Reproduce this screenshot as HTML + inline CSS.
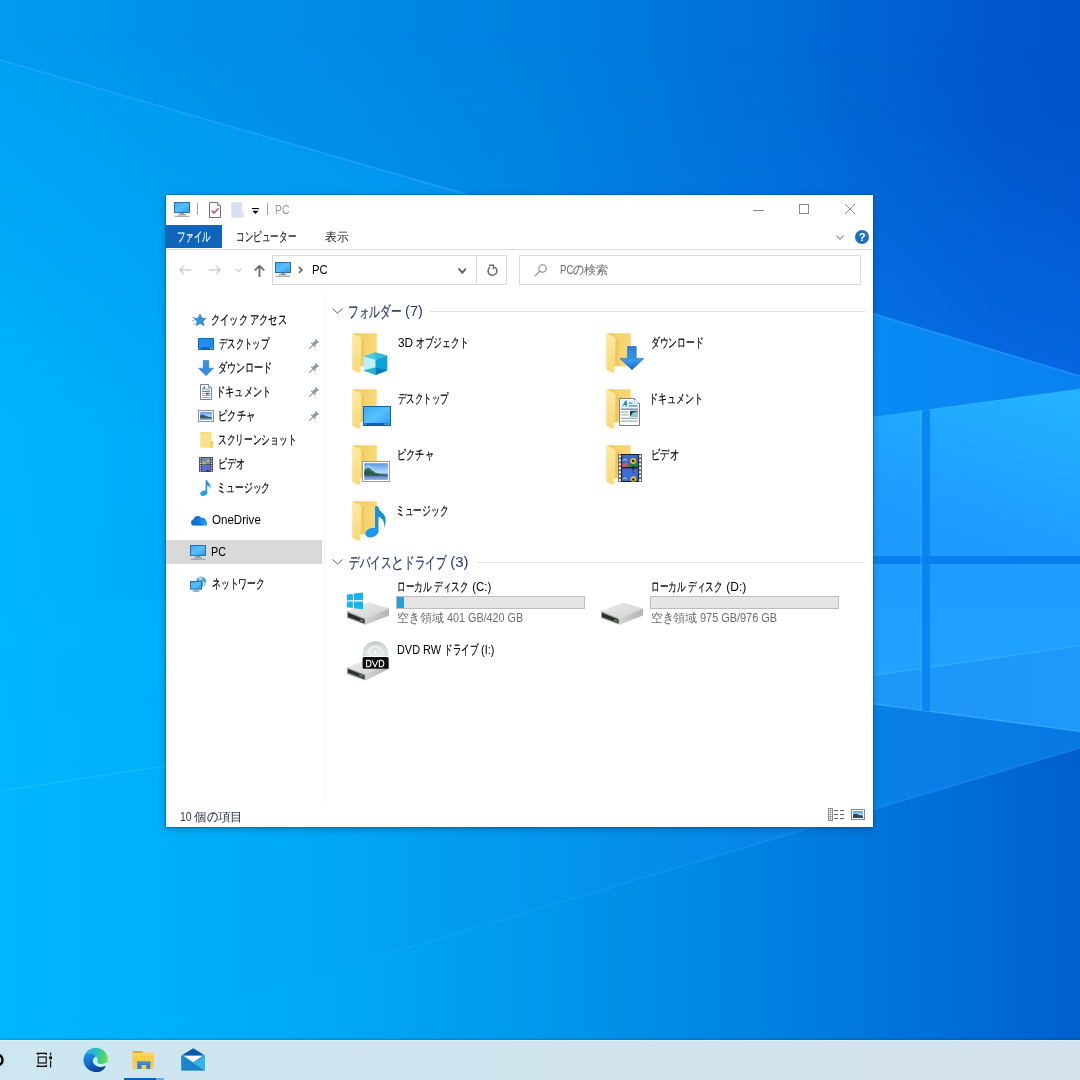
<!DOCTYPE html>
<html lang="ja">
<head>
<meta charset="utf-8">
<title>PC</title>
<style>
html,body{margin:0;padding:0;}
body{width:1080px;height:1080px;overflow:hidden;position:relative;background:#0a84e4;font-family:"Liberation Sans",sans-serif;font-size:12px;color:#000;}
.abs{position:absolute;display:block;}
#bg{position:absolute;left:0;top:0;width:1080px;height:1080px;}
#win{position:absolute;left:166px;top:195px;width:707px;height:632px;background:#fff;box-shadow:0 0 0 1px rgba(0,70,130,.32),0 2px 7px rgba(0,45,80,.38);}
.t{position:absolute;white-space:nowrap;line-height:16px;height:16px;}
.t{white-space:pre;}
.t span{position:absolute;top:0;left:0;display:block;transform-origin:0 50%;}
.t .k,.t .g{-webkit-text-stroke:.2px currentColor;}
.box{position:absolute;box-sizing:border-box;}
#taskbar{position:absolute;left:0;top:1040px;width:1080px;height:40px;background:linear-gradient(90deg,#cde6ef 0%,#d0e4ee 50%,#d5e1ec 100%);box-shadow:0 -1px 2px rgba(0,40,90,.25),inset 0 1px 0 rgba(220,246,255,.7);}
</style>
</head>
<body>

<svg id="bg" viewBox="0 0 1080 1080">
<defs>
<linearGradient id="gBase" x1="0" y1="0" x2="1" y2="0">
<stop offset="0" stop-color="#009aef"/><stop offset=".25" stop-color="#008de8"/><stop offset=".5" stop-color="#0080e0"/><stop offset=".72" stop-color="#006dd8"/><stop offset=".93" stop-color="#0056cc"/><stop offset="1" stop-color="#0053ca"/>
</linearGradient>
<linearGradient id="gDark" x1="0" y1="0" x2="1" y2="0">
<stop offset="0" stop-color="#00b6fd"/><stop offset=".28" stop-color="#00aaf6"/><stop offset=".5" stop-color="#0098ec"/><stop offset=".72" stop-color="#0080e0"/><stop offset=".93" stop-color="#0068d4"/><stop offset="1" stop-color="#0060cc"/>
</linearGradient>
<linearGradient id="gVFade" x1="0" y1="0" x2="0" y2="1">
<stop offset=".03" stop-color="#fff" stop-opacity="0"/><stop offset=".2" stop-color="#fff" stop-opacity=".4"/><stop offset=".4" stop-color="#fff" stop-opacity=".95"/><stop offset=".75" stop-color="#fff" stop-opacity="1"/>
</linearGradient>
<linearGradient id="gHFade" x1="0" y1="0" x2="1" y2="0">
<stop offset="0" stop-color="#000"/><stop offset=".3" stop-color="#000" stop-opacity=".6"/><stop offset="1" stop-color="#000" stop-opacity="0"/>
</linearGradient>
<mask id="mV"><rect width="1080" height="1080" fill="url(#gVFade)"/><rect width="1080" height="600" fill="url(#gHFade)" transform="rotate(180 540 300)"/></mask>
<linearGradient id="gWedge" x1="0" y1="0" x2="1" y2="0">
<stop offset="0" stop-color="#00b2fe" stop-opacity=".22"/><stop offset=".45" stop-color="#04a0fa" stop-opacity=".5"/><stop offset=".8" stop-color="#0a8ef8"/><stop offset="1" stop-color="#0a86f4"/>
</linearGradient>
<linearGradient id="gPane" x1="0" y1="1" x2="1" y2="0">
<stop offset="0" stop-color="#1a94f8"/><stop offset=".55" stop-color="#1f9eff"/><stop offset="1" stop-color="#24b4ff"/>
</linearGradient>
<linearGradient id="gPane2" x1="0" y1="0" x2="0" y2="1">
<stop offset="0" stop-color="#1f9cff"/><stop offset=".55" stop-color="#20a0ff"/><stop offset="1" stop-color="#24acff"/>
</linearGradient>
<linearGradient id="gPaneLo" x1="0" y1="0" x2="1" y2="0">
<stop offset="0" stop-color="#1a92f6"/><stop offset="1" stop-color="#1f99f9"/>
</linearGradient>
<linearGradient id="gBelow" x1="0" y1="0" x2="1" y2="0">
<stop offset="0" stop-color="#00b0fa" stop-opacity="0"/><stop offset=".5" stop-color="#0a94ee" stop-opacity=".3"/><stop offset=".8" stop-color="#0a82ea" stop-opacity=".95"/><stop offset="1" stop-color="#0878e2"/>
</linearGradient>
<linearGradient id="gUp" x1="0" y1="0" x2="0" y2="1">
<stop offset=".3" stop-color="#0a74f0" stop-opacity="0"/><stop offset="1" stop-color="#0a76f4" stop-opacity=".55"/>
</linearGradient>
</defs>
<rect width="1080" height="1080" fill="url(#gBase)"/>
<rect width="1080" height="1080" fill="url(#gDark)" mask="url(#mV)"/>
<polygon points="560,0 1080,0 1080,376 700,261.6 560,221.3" fill="url(#gUp)"/>
<!-- wedge between upper beam and logo top -->
<polygon points="0,60 700,261.6 1080,376 1080,389 873,417.5 0,538" fill="url(#gWedge)" opacity=".92"/>
<!-- below logo -->
<polygon points="600,667.5 1080,731.3 1080,748 0,1069 0,700" fill="url(#gBelow)"/>
<!-- logo panes -->
<polygon points="600,455 1080,389 1080,560 600,560" fill="url(#gPane)"/>
<polygon points="600,560 1080,560 1080,731.3 600,667.5" fill="url(#gPane2)"/>
<polygon points="600,715 1080,645.6 1080,731.3 600,667.5" fill="url(#gPaneLo)"/>
<line x1="600" y1="715" x2="1080" y2="645.6" stroke="#38b8ff" stroke-opacity=".6" stroke-width="1.4"/>
<line x1="600" y1="667.5" x2="1080" y2="731.3" stroke="#3ab0ff" stroke-opacity=".7" stroke-width="1.4"/>
<line x1="600" y1="455" x2="1080" y2="389" stroke="#3cc0ff" stroke-opacity=".5" stroke-width="1.2"/>
<!-- dividers -->
<polygon points="922,410.8 930,409.7 930,711.4 922,710.3" fill="#0a86f0"/>
<rect x="600" y="556" width="480" height="8" fill="#0a80ee"/>
<rect x="920.6" y="411" width="1.4" height="299" fill="#40b0ff" opacity=".5"/>
<!-- beam lines -->
<polyline points="0,60 700,261.6 1080,376" fill="none" stroke="#3ab4ff" stroke-opacity=".45" stroke-width="1.6"/>
<line x1="0" y1="791" x2="600" y2="700" stroke="#4cc8ff" stroke-opacity=".3" stroke-width="1.6"/>
<line x1="1080" y1="748" x2="380" y2="956" stroke="#30a8ff" stroke-opacity=".3" stroke-width="1.6"/>
</svg>

<svg width="0" height="0" style="position:absolute">
<defs>
<linearGradient id="scr" x1="0" y1="0" x2="1" y2="1"><stop offset="0" stop-color="#3aa8f8"/><stop offset=".5" stop-color="#58c0ff"/><stop offset="1" stop-color="#2a98f0"/></linearGradient>
<linearGradient id="fback" x1="0" y1="0" x2="1" y2="0"><stop offset="0" stop-color="#efc75e"/><stop offset=".3" stop-color="#f3cf6a"/><stop offset="1" stop-color="#fbd976"/></linearGradient>
<linearGradient id="fflap" x1="0" y1="0" x2="0" y2="1"><stop offset="0" stop-color="#fde9a0"/><stop offset="1" stop-color="#f9d97a"/></linearGradient>
<linearGradient id="sky" x1="0" y1="0" x2="0" y2="1"><stop offset="0" stop-color="#5a98e8"/><stop offset=".55" stop-color="#b4daf6"/><stop offset=".7" stop-color="#3f6fb8"/><stop offset="1" stop-color="#9db8e4"/></linearGradient>
<linearGradient id="hddtop" x1="0" y1="0" x2="1" y2="1"><stop offset="0" stop-color="#ececec"/><stop offset="1" stop-color="#cfcfcf"/></linearGradient>
<linearGradient id="hddside" x1="0" y1="0" x2="1" y2="0"><stop offset="0" stop-color="#d2d2d2"/><stop offset="1" stop-color="#b4b4b4"/></linearGradient>
<linearGradient id="arr" x1="0" y1="0" x2="0" y2="1"><stop offset="0" stop-color="#2a78dc"/><stop offset=".6" stop-color="#3a9af0"/><stop offset="1" stop-color="#1f66cc"/></linearGradient>
<radialGradient id="disc" cx=".5" cy=".9" r=".9"><stop offset="0" stop-color="#f4f6f6"/><stop offset=".35" stop-color="#dfe6e4"/><stop offset=".7" stop-color="#d2d6d6"/><stop offset="1" stop-color="#c4c8c8"/></radialGradient>
</defs></svg>
<div id="win"></div>
<div class="box" style="left:166px;top:225px;width:56px;height:23px;background:#1064ba"></div>
<div class="box" style="left:166px;top:249px;width:707px;height:1px;background:#dadbdc"></div>
<svg class="abs" style="left:174px;top:202px" width="16" height="15" viewBox="0 0 16 15" ><rect x="0.5" y="0.5" width="15" height="10" fill="url(#scr)" stroke="#2b6ea8" stroke-width="1"/>
<rect x="6" y="11" width="4" height="1.6" fill="#8aa0b4"/><rect x="4" y="12.3" width="8" height="1" fill="#6e8aa2"/>
<rect x="0.5" y="13.8" width="15" height="1" fill="#9a9a9a"/></svg>
<div class="box" style="left:197px;top:203px;width:1px;height:12px;background:#a0a0a0"></div>
<svg class="abs" style="left:209px;top:202px" width="12" height="16" viewBox="0 0 12 16" ><path d="M0.5,0.5 H8.5 L11.5,3.5 V15.5 H0.5 Z" fill="#fff" stroke="#6e6e6e" stroke-width="1"/><path d="M8.5,0.5 V3.5 H11.5" fill="#dfe6ee" stroke="#6e6e6e" stroke-width=".8"/>
<path d="M2.6,8.6 L5,11 L9.6,6.2" fill="none" stroke="#b26a52" stroke-width="1.6"/></svg>
<svg class="abs" style="left:231px;top:202px" width="13" height="16" viewBox="0 0 13 16" ><path d="M0.3,0.3 H11.2 V8.8 H12.6 V15.8 H0.3 Z" fill="#d6dfec"/><path d="M10.2,4 H11.2 V15.8 H10.2 Z" fill="#e6edf6"/></svg>
<svg class="abs" style="left:252px;top:208px" width="7" height="6" viewBox="0 0 7 6" ><rect x="0" y="0" width="7" height="1.1" fill="#000"/><path d="M0.4,2.8 H6.6 L3.5,6 Z" fill="#000"/></svg>
<div class="box" style="left:267px;top:203px;width:1px;height:12px;background:#a0a0a0"></div>
<div class="box" style="left:753px;top:210px;width:11px;height:1px;background:#8a8a8a"></div>
<div class="box" style="left:799px;top:204px;width:10px;height:10px;border:1px solid #8a8a8a"></div>
<svg class="abs" style="left:844px;top:203px" width="12" height="12" viewBox="0 0 12 12" ><path d="M1,1 L11,11 M11,1 L1,11" fill="none" stroke="#8a8a8a" stroke-width="1" /></svg>
<svg class="abs" style="left:836px;top:235px" width="8" height="5" viewBox="0 0 8 5" ><path d="M0.5,0.5 L4.0,4.3 L7.5,0.5" fill="none" stroke="#9a9a9a" stroke-width="1.2" /></svg>
<svg class="abs" style="left:855px;top:230px" width="14" height="14" viewBox="0 0 14 14" ><circle cx="7" cy="7" r="7" fill="#1b70c2"/><text x="7" y="11" font-family="Liberation Sans, sans-serif" font-weight="bold" font-size="11" fill="#fff" text-anchor="middle">?</text></svg>
<svg class="abs" style="left:179px;top:265px" width="12" height="10" viewBox="0 0 12 10" ><path d="M5,0.7 L0.8,5 L5,9.3 M1,5 H12" fill="none" stroke="#d0d0d0" stroke-width="1.5" /></svg>
<svg class="abs" style="left:209px;top:265px" width="12" height="10" viewBox="0 0 12 10" ><path d="M7,0.7 L11.2,5 L7,9.3 M11,5 H0" fill="none" stroke="#d0d0d0" stroke-width="1.5" /></svg>
<svg class="abs" style="left:235px;top:267.6px" width="7" height="4.5" viewBox="0 0 7 4.5" ><path d="M0.5,0.5 L3.5,3.8 L6.5,0.5" fill="none" stroke="#d4d4d4" stroke-width="1.4" /></svg>
<svg class="abs" style="left:254px;top:265px" width="11" height="12" viewBox="0 0 11 12" ><path d="M0.8,5.4 L5.5,0.9 L10.2,5.4 M5.5,1.2 V12" fill="none" stroke="#6a6a6a" stroke-width="1.8" /></svg>
<div class="box" style="left:272px;top:255px;width:235px;height:30px;border:1px solid #d9d9d9;background:#fff"></div>
<div class="box" style="left:476px;top:256px;width:1px;height:28px;background:#d9d9d9"></div>
<svg class="abs" style="left:275px;top:262px" width="16" height="15" viewBox="0 0 16 15" ><rect x="0.5" y="0.5" width="15" height="10" fill="url(#scr)" stroke="#2b6ea8" stroke-width="1"/>
<rect x="6" y="11" width="4" height="1.6" fill="#8aa0b4"/><rect x="4" y="12.3" width="8" height="1" fill="#6e8aa2"/>
<rect x="0.5" y="13.8" width="15" height="1" fill="#9a9a9a"/></svg>
<svg class="abs" style="left:298px;top:266px" width="5" height="8" viewBox="0 0 5 8" ><path d="M0.9,1.1 L3.9,4 L0.9,6.9" fill="none" stroke="#5a5a5a" stroke-width="1.6" /></svg>
<svg class="abs" style="left:457.6px;top:268.4px" width="8.6" height="5.4" viewBox="0 0 8.6 5.4" ><path d="M0.5,0.5 L4.3,4.7 L8.1,0.5" fill="none" stroke="#606060" stroke-width="1.9" /></svg>
<svg class="abs" style="left:486.9px;top:264.4px" width="11" height="12" viewBox="0 0 11 12" ><path d="M7.6,3 A4.4,4.4 0 1 1 3.3,3.05" fill="none" stroke="#6a6a6a" stroke-width="1.5"/><path d="M2,1.3 H6.4 V5.4" fill="none" stroke="#6a6a6a" stroke-width="1.4"/></svg>
<div class="box" style="left:519px;top:255px;width:342px;height:30px;border:1px solid #d9d9d9;background:#fff"></div>
<svg class="abs" style="left:534px;top:264px" width="13" height="13" viewBox="0 0 13 13" ><circle cx="8.6" cy="4.4" r="3.7" fill="none" stroke="#8a8a8a" stroke-width="1.1"/><path d="M5.9,7.1 L0.6,12.4" stroke="#8a8a8a" stroke-width="1.2"/></svg>
<div class="box" style="left:166px;top:540px;width:156px;height:24px;background:#d9d9d9"></div>
<div class="box" style="left:324px;top:293px;width:1px;height:510px;background:#f6f6f6"></div>
<svg class="abs" style="left:192px;top:314px" width="14" height="12" viewBox="0 0 14 12" ><path d="M8,0.2 L9.9,4.2 L13.9,4.5 L10.8,7.3 L11.8,11.6 L8,9.3 L4.2,11.6 L5.2,7.3 L2.1,4.5 L6.1,4.2 Z" fill="#2c95e6" stroke="#1f6fae" stroke-width=".7"/>
<rect x="0.2" y="3" width="2.4" height=".8" fill="#5aaee8"/><rect x="0" y="6.4" width="2.6" height=".8" fill="#5aaee8"/><rect x="0.8" y="9.6" width="2.4" height=".8" fill="#5aaee8"/></svg>
<svg class="abs" style="left:198px;top:338px" width="16" height="12" viewBox="0 0 16 12" ><rect x="0.5" y="0.5" width="15" height="11" fill="#1e8fee" stroke="#106cc0" stroke-width="1"/>
<rect x="1" y="9.4" width="14" height="1.8" fill="#0d62ac"/><rect x="1.4" y="9.8" width="1" height="1" fill="#fff"/><rect x="12" y="9.8" width="1" height="1" fill="#fff"/><rect x="13.7" y="9.8" width="1" height="1" fill="#fff"/></svg>
<svg class="abs" style="left:198px;top:360px" width="16" height="16" viewBox="0 0 16 16" ><path d="M5.2,0.2 H10.8 V8.2 H15.6 L8,15.8 L0.4,8.2 H5.2 Z" fill="#3b8de0" stroke="#2a74c8" stroke-width=".5"/></svg>
<svg class="abs" style="left:200px;top:384px" width="12" height="16" viewBox="0 0 12 16" ><path d="M0.5,0.5 H8.5 L11.5,3.5 V15.5 H0.5 Z" fill="#fff" stroke="#7a7f86" stroke-width="1"/><path d="M8.5,0.5 V3.5 H11.5" fill="#eef2f4" stroke="#7a7f86" stroke-width=".8"/>
<path d="M2,5.6 L4.2,2.2 H5 L5.2,5.6 H4.3 L4.2,4.8 H3.2 L2.8,5.6 Z" fill="#2a78b8"/><rect x="6" y="4.6" width="4" height=".9" fill="#4a90c0"/>
<rect x="2" y="6.8" width="8" height="1" fill="#2f6f9a"/><rect x="2" y="9" width="3.4" height=".9" fill="#98a4ae"/><rect x="2" y="11" width="3.4" height=".9" fill="#98a4ae"/><rect x="6.2" y="8.8" width="3.8" height="3" fill="#2d4658"/><path d="M6.2,11.8 L8,9.6 L10,9.2 V11.8 Z" fill="#8cc8e0"/>
<rect x="2" y="13" width="8" height=".9" fill="#98a4ae"/></svg>
<svg class="abs" style="left:198px;top:410px" width="16" height="12" viewBox="0 0 16 12" ><rect x="0.5" y="0.5" width="15" height="11" fill="#fff" stroke="#8a939c" stroke-width="1"/>
<rect x="2" y="2" width="12" height="8" fill="url(#sky)"/><path d="M2,5.6 Q4,3.6 6,5 Q9,7 14,7.4 V8 H2 Z" fill="#2f5f58"/></svg>
<svg class="abs" style="left:200px;top:432px" width="13" height="16" viewBox="0 0 13 16" ><path d="M0.3,0.3 H11.4 V9 H12.7 V15.8 H0.3 Z" fill="#fbe087"/><path d="M10.4,9 H12.7 V15.8 H10.4 Z" fill="#f1cd55"/><path d="M0.3,0.3 H11.4 V1 H0.3 Z" fill="#f3d36a"/></svg>
<svg class="abs" style="left:199px;top:457px" width="14" height="15" viewBox="0 0 14 15" ><rect width="14" height="15" fill="#3c4448"/><rect x="0.8" y="0.90" width="1.1" height="1.2" fill="#fff"/><rect x="12.1" y="0.90" width="1.1" height="1.2" fill="#fff"/><rect x="0.8" y="3.35" width="1.1" height="1.2" fill="#fff"/><rect x="12.1" y="3.35" width="1.1" height="1.2" fill="#fff"/><rect x="0.8" y="5.80" width="1.1" height="1.2" fill="#fff"/><rect x="12.1" y="5.80" width="1.1" height="1.2" fill="#fff"/><rect x="0.8" y="8.25" width="1.1" height="1.2" fill="#fff"/><rect x="12.1" y="8.25" width="1.1" height="1.2" fill="#fff"/><rect x="0.8" y="10.70" width="1.1" height="1.2" fill="#fff"/><rect x="12.1" y="10.70" width="1.1" height="1.2" fill="#fff"/><rect x="0.8" y="13.15" width="1.1" height="1.2" fill="#fff"/><rect x="12.1" y="13.15" width="1.1" height="1.2" fill="#fff"/><rect x="2.6" y="0.8" width="8.8" height="6.4" fill="#6c8cb8"/><rect x="2.6" y="8" width="8.8" height="6.4" fill="#5a6ed0"/>
<path d="M2.6,5 L6,4.2 L8,7.2 H2.6 Z" fill="#c8a080"/><circle cx="9" cy="4" r="1.3" fill="#d8c040"/><path d="M7,14.4 Q8.6,10.5 10.6,14.4 Z" fill="#2a2a3a"/></svg>
<svg class="abs" style="left:200px;top:479.6px" width="12" height="17" viewBox="0 0 12 17" ><path d="M5.6,0.3 H7.2 C7.6,2.6 11.4,4 10.6,10 C10.4,7 9,5.6 7.2,5.2 V13 H5.6 Z" fill="#1f90d8"/><ellipse cx="3.8" cy="13.2" rx="3.6" ry="2.6" transform="rotate(-15 3.8 13.2)" fill="#2a9cec"/></svg>
<svg class="abs" style="left:189.5px;top:514.5px" width="17" height="11" viewBox="0 0 17 11" ><defs><linearGradient id="cl" x1="0" y1="0" x2="1" y2="1"><stop offset="0" stop-color="#0a5cc0"/><stop offset=".5" stop-color="#1484e0"/><stop offset="1" stop-color="#2fb0f4"/></linearGradient></defs>
<path d="M3.6,10.6 A3.3,3.3 0 0 1 3.4,4.2 A4.6,4.6 0 0 1 11.6,3 A3.4,3.4 0 0 1 16.2,6.2 A2.3,2.3 0 0 1 14.6,10.6 Z" fill="url(#cl)"/>
<path d="M1.2,8.6 Q4,5.2 8.4,6.4 L14.6,10.6 H3.6 Q2,10.4 1.2,8.6 Z" fill="#0a64c8" opacity=".55"/></svg>
<svg class="abs" style="left:190px;top:545px" width="16" height="15" viewBox="0 0 16 15" ><rect x="0.5" y="0.5" width="15" height="10" fill="url(#scr)" stroke="#2b6ea8" stroke-width="1"/>
<rect x="6" y="11" width="4" height="1.6" fill="#8aa0b4"/><rect x="4" y="12.3" width="8" height="1" fill="#6e8aa2"/>
<rect x="0.5" y="13.8" width="15" height="1" fill="#9a9a9a"/></svg>
<svg class="abs" style="left:189.5px;top:575.8px" width="17" height="16" viewBox="0 0 17 16" ><circle cx="11.2" cy="5.6" r="5.2" fill="#5aa0d8"/><path d="M8,2 Q11,0.2 13,1.4 Q12,4 9.6,4.6 Z M13,6 Q15.6,5.4 16,7.4 Q15,10 13,10.4 Z" fill="#bfe0f4" opacity=".85"/>
<rect x="0.5" y="5.5" width="11" height="7.6" fill="url(#scr)" stroke="#2b6ea8" stroke-width="1"/><rect x="4.4" y="13.4" width="3.4" height="1.2" fill="#7e97ac"/><rect x="2.6" y="14.6" width="7" height="1" fill="#5a88b0"/></svg>
<svg class="abs" style="left:308.4px;top:338.5px" width="11" height="11" viewBox="0 0 11 11" overflow="visible"><g transform="rotate(45 5.5 5.5)" fill="#8d9394"><rect x="3.2" y="0" width="4.6" height="1.3"/><rect x="3.9" y="1.3" width="3.2" height="3.6"/><path d="M2.2,6.4 Q2.4,4.9 3.9,4.9 H7.1 Q8.6,4.9 8.8,6.4 Z"/><rect x="5" y="6.4" width="1" height="5.2"/></g></svg>
<svg class="abs" style="left:308.4px;top:362.5px" width="11" height="11" viewBox="0 0 11 11" overflow="visible"><g transform="rotate(45 5.5 5.5)" fill="#8d9394"><rect x="3.2" y="0" width="4.6" height="1.3"/><rect x="3.9" y="1.3" width="3.2" height="3.6"/><path d="M2.2,6.4 Q2.4,4.9 3.9,4.9 H7.1 Q8.6,4.9 8.8,6.4 Z"/><rect x="5" y="6.4" width="1" height="5.2"/></g></svg>
<svg class="abs" style="left:308.4px;top:386.5px" width="11" height="11" viewBox="0 0 11 11" overflow="visible"><g transform="rotate(45 5.5 5.5)" fill="#8d9394"><rect x="3.2" y="0" width="4.6" height="1.3"/><rect x="3.9" y="1.3" width="3.2" height="3.6"/><path d="M2.2,6.4 Q2.4,4.9 3.9,4.9 H7.1 Q8.6,4.9 8.8,6.4 Z"/><rect x="5" y="6.4" width="1" height="5.2"/></g></svg>
<svg class="abs" style="left:308.4px;top:410.5px" width="11" height="11" viewBox="0 0 11 11" overflow="visible"><g transform="rotate(45 5.5 5.5)" fill="#8d9394"><rect x="3.2" y="0" width="4.6" height="1.3"/><rect x="3.9" y="1.3" width="3.2" height="3.6"/><path d="M2.2,6.4 Q2.4,4.9 3.9,4.9 H7.1 Q8.6,4.9 8.8,6.4 Z"/><rect x="5" y="6.4" width="1" height="5.2"/></g></svg>
<svg class="abs" style="left:332px;top:308px" width="11" height="5.8" viewBox="0 0 11 5.8" ><path d="M0.5,0.5 L5.5,5.1 L10.5,0.5" fill="none" stroke="#5a5a5a" stroke-width="1" /></svg>
<div class="box" style="left:430px;top:311px;width:435px;height:1px;background:#e2e2e2"></div>
<svg class="abs" style="left:332px;top:559px" width="11" height="5.8" viewBox="0 0 11 5.8" ><path d="M0.5,0.5 L5.5,5.1 L10.5,0.5" fill="none" stroke="#5a5a5a" stroke-width="1" /></svg>
<div class="box" style="left:477px;top:562px;width:388px;height:1px;background:#e2e2e2"></div>
<svg class="abs" style="left:352px;top:333px" width="26" height="40" viewBox="0 0 26 40" ><path d="M1.2,0.3 H24.8 V33.2 H7 Z" fill="url(#fback)"/>
<path d="M9.4,6 H12.2 V33.2 H9.4 Z" fill="#e9bf58" opacity=".55"/>
<path d="M0.2,0.6 L7.2,3.4 Q9.6,4.5 9.5,7.2 L8.2,38.6 Q8.1,39.9 7,39.6 L4.4,39.2 L0.2,36.4 Z" fill="url(#fflap)"/></svg>
<svg class="abs" style="left:352px;top:389px" width="26" height="40" viewBox="0 0 26 40" ><path d="M1.2,0.3 H24.8 V33.2 H7 Z" fill="url(#fback)"/>
<path d="M9.4,6 H12.2 V33.2 H9.4 Z" fill="#e9bf58" opacity=".55"/>
<path d="M0.2,0.6 L7.2,3.4 Q9.6,4.5 9.5,7.2 L8.2,38.6 Q8.1,39.9 7,39.6 L4.4,39.2 L0.2,36.4 Z" fill="url(#fflap)"/></svg>
<svg class="abs" style="left:352px;top:445px" width="26" height="40" viewBox="0 0 26 40" ><path d="M1.2,0.3 H24.8 V33.2 H7 Z" fill="url(#fback)"/>
<path d="M9.4,6 H12.2 V33.2 H9.4 Z" fill="#e9bf58" opacity=".55"/>
<path d="M0.2,0.6 L7.2,3.4 Q9.6,4.5 9.5,7.2 L8.2,38.6 Q8.1,39.9 7,39.6 L4.4,39.2 L0.2,36.4 Z" fill="url(#fflap)"/></svg>
<svg class="abs" style="left:352px;top:501px" width="26" height="40" viewBox="0 0 26 40" ><path d="M1.2,0.3 H24.8 V33.2 H7 Z" fill="url(#fback)"/>
<path d="M9.4,6 H12.2 V33.2 H9.4 Z" fill="#e9bf58" opacity=".55"/>
<path d="M0.2,0.6 L7.2,3.4 Q9.6,4.5 9.5,7.2 L8.2,38.6 Q8.1,39.9 7,39.6 L4.4,39.2 L0.2,36.4 Z" fill="url(#fflap)"/></svg>
<svg class="abs" style="left:606px;top:333px" width="26" height="40" viewBox="0 0 26 40" ><path d="M1.2,0.3 H24.8 V33.2 H7 Z" fill="url(#fback)"/>
<path d="M9.4,6 H12.2 V33.2 H9.4 Z" fill="#e9bf58" opacity=".55"/>
<path d="M0.2,0.6 L7.2,3.4 Q9.6,4.5 9.5,7.2 L8.2,38.6 Q8.1,39.9 7,39.6 L4.4,39.2 L0.2,36.4 Z" fill="url(#fflap)"/></svg>
<svg class="abs" style="left:606px;top:389px" width="26" height="40" viewBox="0 0 26 40" ><path d="M1.2,0.3 H24.8 V33.2 H7 Z" fill="url(#fback)"/>
<path d="M9.4,6 H12.2 V33.2 H9.4 Z" fill="#e9bf58" opacity=".55"/>
<path d="M0.2,0.6 L7.2,3.4 Q9.6,4.5 9.5,7.2 L8.2,38.6 Q8.1,39.9 7,39.6 L4.4,39.2 L0.2,36.4 Z" fill="url(#fflap)"/></svg>
<svg class="abs" style="left:606px;top:445px" width="26" height="40" viewBox="0 0 26 40" ><path d="M1.2,0.3 H24.8 V33.2 H7 Z" fill="url(#fback)"/>
<path d="M9.4,6 H12.2 V33.2 H9.4 Z" fill="#e9bf58" opacity=".55"/>
<path d="M0.2,0.6 L7.2,3.4 Q9.6,4.5 9.5,7.2 L8.2,38.6 Q8.1,39.9 7,39.6 L4.4,39.2 L0.2,36.4 Z" fill="url(#fflap)"/></svg>
<svg class="abs" style="left:362.5px;top:351.5px" width="25" height="24" viewBox="0 0 25 24" ><polygon points="0.5,4.5 12,0.3 24.3,3.5 12.5,8" fill="#4cc8e0"/>
<polygon points="12,0.3 24.3,3.5 12.5,8" fill="#36b4dc" opacity=".7"/>
<polygon points="0.5,4.5 12.5,8 12.5,23 0.5,18.5" fill="#bdeffa"/>
<polygon points="12.5,8 24.3,3.5 24.3,18.5 12.5,23" fill="#0ba2da"/>
<polygon points="0.5,18.5 12.5,15.2 12.5,23" fill="#2ab4cc"/>
<polygon points="12.5,15.2 24.3,18.5 12.5,23" fill="#0b7cb4"/></svg>
<svg class="abs" style="left:363px;top:406px" width="28" height="20" viewBox="0 0 28 20" ><rect x="0.5" y="0.5" width="27" height="19" fill="url(#scr)" stroke="#0d62ac" stroke-width="1"/>
<rect x="1" y="17" width="26" height="2.2" fill="#0d62ac"/>
<rect x="1.6" y="17.6" width="1" height="1" fill="#fff"/><rect x="21.6" y="17.6" width="1" height="1" fill="#fff"/><rect x="23.6" y="17.6" width="1" height="1" fill="#fff"/><rect x="25.5" y="17.6" width="1" height="1" fill="#fff"/></svg>
<svg class="abs" style="left:362px;top:461px" width="28" height="21" viewBox="0 0 28 21" ><rect x="0.5" y="0.5" width="27" height="20" fill="#fff" stroke="#9a9a9a" stroke-width="1"/>
<rect x="2.3" y="2.2" width="23.6" height="16.8" fill="url(#sky)"/>
<path d="M2.3,9 Q5,5.5 8,7.5 Q11,10 14,12 Q20,13.8 25.9,14 V14.6 H2.3 Z" fill="#3d7a62"/>
<path d="M2.3,10.5 Q6,8 10,11 Q16,13.6 25.9,14.2 V14.8 H2.3 Z" fill="#2c5c50"/>
<path d="M4,6.2 Q6,4.2 8,5.6 Q10,7 11.5,8.6" fill="none" stroke="#d8ecfa" stroke-width="1" opacity=".8"/></svg>
<svg class="abs" style="left:365px;top:506px" width="23" height="32" viewBox="0 0 23 32" ><path d="M10.2,0.4 H13.2 C13.6,4 16,5.6 18,7.6 C21.4,11 21.6,16 18.6,23.2 C20.2,17.6 19.2,13.2 13.3,10.4 V26 H10.2 Z" fill="#1d8fd0"/>
<path d="M10.2,0.4 H13.3 V26 H10.2 Z" fill="#1a8fe0"/>
<ellipse cx="6.8" cy="26.6" rx="6.6" ry="4.6" transform="rotate(-18 6.8 26.6)" fill="#1b98ea"/></svg>
<svg class="abs" style="left:619.5px;top:346px" width="24" height="24" viewBox="0 0 24 24" ><path d="M7.6,0.3 H16.2 V12.4 H24 L12,23.8 L0,12.4 H7.6 Z" fill="url(#arr)" stroke="#1f62c4" stroke-width=".6"/></svg>
<svg class="abs" style="left:619px;top:398px" width="21" height="28" viewBox="0 0 21 28" ><path d="M0.5,0.5 H15.5 L20.5,5.5 V27.5 H0.5 Z" fill="#fff" stroke="#7e7e7e" stroke-width="1"/>
<path d="M15.5,0.5 V5.5 H20.5" fill="#e6eef2" stroke="#7e7e7e" stroke-width="1"/>
<rect x="1.4" y="2" width="17.6" height="8" fill="#d6f4fa" opacity=".8"/>
<path d="M3,8.4 L6.6,2.6 H7.6 L8,8.4 H6.6 L6.5,7 H4.8 L4,8.4 Z" fill="#2a78b8"/>
<rect x="9.6" y="4.6" width="4" height="1" fill="#3c6c94"/><rect x="9.6" y="7.4" width="9" height="1" fill="#3c6c94"/>
<rect x="2" y="10.6" width="17" height="1.1" fill="#2f6f9a"/>
<rect x="2" y="13.6" width="7.4" height="1" fill="#8a9aa6"/><rect x="2" y="16.4" width="7.4" height="1" fill="#b89a90"/>
<rect x="11" y="12.8" width="8" height="5.6" fill="#24384a"/><path d="M11,18.4 L14,14.5 L19,13.2 V18.4 Z" fill="#8cc8e0"/>
<rect x="2" y="19.8" width="17" height="1" fill="#8a9aa6"/><rect x="2" y="22.6" width="17" height="1" fill="#8a9aa6"/></svg>
<svg class="abs" style="left:618px;top:454px" width="24" height="28" viewBox="0 0 24 28" ><rect x="0" y="0" width="24" height="28" fill="#6e6e6e"/><rect x="1" y="1.40" width="1.8" height="2" fill="#fff"/><rect x="21.2" y="1.40" width="1.8" height="2" fill="#fff"/><rect x="1" y="5.35" width="1.8" height="2" fill="#fff"/><rect x="21.2" y="5.35" width="1.8" height="2" fill="#fff"/><rect x="1" y="9.30" width="1.8" height="2" fill="#fff"/><rect x="21.2" y="9.30" width="1.8" height="2" fill="#fff"/><rect x="1" y="13.25" width="1.8" height="2" fill="#fff"/><rect x="21.2" y="13.25" width="1.8" height="2" fill="#fff"/><rect x="1" y="17.20" width="1.8" height="2" fill="#fff"/><rect x="21.2" y="17.20" width="1.8" height="2" fill="#fff"/><rect x="1" y="21.15" width="1.8" height="2" fill="#fff"/><rect x="21.2" y="21.15" width="1.8" height="2" fill="#fff"/><rect x="1" y="25.10" width="1.8" height="2" fill="#fff"/><rect x="21.2" y="25.10" width="1.8" height="2" fill="#fff"/>
<rect x="3.2" y="0" width="17.6" height="28" fill="#14222c"/>
<rect x="4.2" y="1" width="15.6" height="12" fill="#3c68d0"/><rect x="4.2" y="14.4" width="15.6" height="12.6" fill="#3c6cdc"/>
<path d="M4.2,9.6 L8,8.4 L10.6,10.6 L9,13 H4.2 Z" fill="#d8506a"/><path d="M10.6,10.6 L19.8,8.6 V13 H9 Z" fill="#2c7e46"/>
<circle cx="15.2" cy="7" r="3" fill="#e8c01c"/><circle cx="15.2" cy="7" r="1.3" fill="#2a1c0c"/>
<path d="M4.8,6.4 Q7,4.4 9,6.4" stroke="#cfe4ff" stroke-width="1" fill="none"/>
<path d="M14.4,12 L16.4,12 L16,19 L14.8,19 Z" fill="#1c2430"/><circle cx="16.4" cy="17" r="1.4" fill="#c84870"/>
<circle cx="15.4" cy="25" r="2.8" fill="#e8c820"/><circle cx="15.4" cy="25.4" r="1.2" fill="#2a1c0c"/><path d="M4.8,25 Q6.8,23 8.8,25" stroke="#b8e8c8" stroke-width="1" fill="none"/></svg>
<svg class="abs" style="left:346px;top:591.5px" width="44" height="34" viewBox="0 0 44 34" ><polygon points="1,19 23,10.6 43,16.4 19.5,26.6" fill="url(#hddtop)"/>
<polygon points="19.5,26.6 43,16.4 43,23.6 19.5,32.8" fill="url(#hddside)"/>
<polygon points="1,19 19.5,26.6 19.5,32.8 1,26" fill="#a2a2a2"/>
<polygon points="2,20.8 18.4,27.5 18.4,31.2 2,24.9" fill="#2a2d2a"/>
<polygon points="14.4,27.4 17,28.4 17,29.6 14.4,28.6" fill="#8fe8b0"/><polygon points="0.9,2.5 6.9,1.9 6.9,8.3 0.9,8.4" fill="#14b4f0"/><polygon points="8,1.6 17.1,0.4 17.1,8.3 8,8.3" fill="#14b4f0"/>
<polygon points="0.9,9.5 6.9,9.5 6.9,16 0.9,15.3" fill="#14b4f0"/><polygon points="8,9.5 17.1,9.5 17.1,17.2 8,16.2" fill="#14b4f0"/></svg>
<svg class="abs" style="left:600px;top:591.5px" width="44" height="34" viewBox="0 0 44 34" ><polygon points="1,19 23,10.6 43,16.4 19.5,26.6" fill="url(#hddtop)"/>
<polygon points="19.5,26.6 43,16.4 43,23.6 19.5,32.8" fill="url(#hddside)"/>
<polygon points="1,19 19.5,26.6 19.5,32.8 1,26" fill="#a2a2a2"/>
<polygon points="2,20.8 18.4,27.5 18.4,31.2 2,24.9" fill="#2a2d2a"/>
<polygon points="14.4,27.4 17,28.4 17,29.6 14.4,28.6" fill="#8fe8b0"/></svg>
<svg class="abs" style="left:346px;top:639.5px" width="44" height="41" viewBox="0 0 44 41" ><path d="M16.6,14 A12.8,12.8 0 0 1 42.2,14 L42.2,16 H16.6 Z" fill="url(#disc)"/>
<path d="M22,14 A7.4,7.4 0 0 1 36.8,14" fill="none" stroke="#eef2f0" stroke-width="2.2" opacity=".9"/>
<circle cx="29.4" cy="12.6" r="2.4" fill="#f6f8f8" stroke="#c4c8c8" stroke-width=".6"/>
<polygon points="1,27.5 20,20 43,23 19.5,34.5" fill="url(#hddtop)"/>
<polygon points="19.5,34.5 43,23 43,29 19.5,40.5" fill="url(#hddside)"/>
<polygon points="1,27.5 19.5,34.5 19.5,40.5 1,33.9" fill="#9c9c9c"/>
<polygon points="2,29.1 18.4,35.4 18.4,38.9 2,32.8" fill="#2c2f2c"/>
<polygon points="13,34.4 17,35.9 17,37 13,35.5" fill="#5fc080"/>
<rect x="16.6" y="17" width="26" height="11.8" rx="1.6" fill="#0c0c0c"/>
<g fill="none" stroke="#fff" stroke-width="1.05" stroke-linejoin="round"><path d="M20.6,20.2 V26.8 H22.2 Q25,26.6 25,23.5 Q25,20.4 22.2,20.2 Z"/><path d="M26,20.2 L29,26.8 L32,20.2"/><path d="M33.4,20.2 V26.8 H35 Q37.8,26.6 37.8,23.5 Q37.8,20.4 35,20.2 Z"/></g></svg>
<div class="box" style="left:396px;top:596px;width:189px;height:13px;border:1px solid #bcbcbc;background:#e6e6e6"></div>
<div class="box" style="left:397px;top:597px;width:7px;height:11px;background:#26a0da"></div>
<div class="box" style="left:650px;top:596px;width:189px;height:13px;border:1px solid #bcbcbc;background:#e6e6e6"></div>
<svg class="abs" style="left:828px;top:808px" width="16" height="13" viewBox="0 0 16 13" ><rect x="0.5" y="0.5" width="4" height="12" fill="#fff" stroke="#8a8a8a" stroke-width="1"/><path d="M0.5,4.5 H4.5 M0.5,8.5 H4.5" stroke="#8a8a8a" stroke-width=".8"/><circle cx="2.5" cy="2.5" r=".8" fill="#444"/><rect x="6" y="2.0" width="4" height="1.1" fill="#6a6a6a"/><rect x="12" y="2.0" width="4" height="1.1" fill="#6a6a6a"/><circle cx="2.5" cy="6.5" r=".8" fill="#444"/><rect x="6" y="6.0" width="4" height="1.1" fill="#6a6a6a"/><rect x="12" y="6.0" width="4" height="1.1" fill="#6a6a6a"/><circle cx="2.5" cy="10.5" r=".8" fill="#444"/><rect x="6" y="10.0" width="4" height="1.1" fill="#6a6a6a"/><rect x="12" y="10.0" width="4" height="1.1" fill="#6a6a6a"/></svg>
<svg class="abs" style="left:851px;top:809px" width="14" height="11" viewBox="0 0 14 11" ><rect x="0.5" y="0.5" width="13" height="10" fill="#fff" stroke="#8a8a8a" stroke-width="1"/><rect x="2" y="2" width="10" height="7" fill="url(#sky)"/><path d="M2,5.4 Q5,3.6 8,6 L12,7 V9 H2 Z" fill="#2f4a5a"/></svg>
<div class="t" id="t_title" style="left:275.10px;top:201.8px;font-size:12px;line-height:16px;height:16px;color:#999"><span class="l" style="left:0.00px;transform:scaleX(0.8691);">PC</span></div>
<div class="t" id="t_file" style="left:176.50px;top:229.3px;font-size:12px;line-height:16px;height:16px;color:#fff"><span class="k" style="font-size:13.00px;left:0.00px;transform:scaleX(0.6502);">ファイル</span></div>
<div class="t" id="t_comp" style="left:235.50px;top:229.3px;font-size:12px;line-height:16px;height:16px;color:#222"><span class="k" style="font-size:13.00px;left:0.00px;transform:scaleX(0.6621);">コンピューター</span></div>
<div class="t" id="t_view" style="left:324.70px;top:229.3px;font-size:12px;line-height:16px;height:16px;color:#222"><span class="h" style="left:0.00px;transform:scaleX(0.9840);">表示</span></div>
<div class="t" id="t_addr" style="left:312.30px;top:262.3px;font-size:12px;line-height:16px;height:16px;color:#000"><span class="l" style="left:0.00px;transform:scaleX(0.9381);">PC</span></div>
<div class="t" id="t_search" style="left:559.70px;top:262.3px;font-size:12px;line-height:16px;height:16px;color:#6d6d6d"><span class="l" style="left:0.00px;transform:scaleX(0.7976);">PC</span><span class="g" style="font-size:13.00px;left:13.30px;transform:scaleX(0.8426);">の</span><span class="h" style="left:24.25px;transform:scaleX(1.0166);">検索</span></div>
<div class="t" id="n_quick" style="left:210.70px;top:311.8px;font-size:12px;line-height:16px;height:16px;color:#000"><span class="k" style="font-size:13.00px;left:0.00px;transform:scaleX(0.7086);">クイック</span><span class="l" style="left:36.85px;transform:scaleX(0.7086);"> </span><span class="k" style="font-size:13.00px;left:39.22px;transform:scaleX(0.7086);">アクセス</span></div>
<div class="t" id="n_desk" style="left:219.30px;top:335.6px;font-size:12px;line-height:16px;height:16px;color:#000"><span class="k" style="font-size:13.00px;left:0.00px;transform:scaleX(0.6436);">デスクトップ</span></div>
<div class="t" id="n_down" style="left:218.30px;top:359.6px;font-size:12px;line-height:16px;height:16px;color:#000"><span class="k" style="font-size:13.00px;left:0.00px;transform:scaleX(0.6987);">ダウンロード</span></div>
<div class="t" id="n_doc" style="left:216.30px;top:383.6px;font-size:12px;line-height:16px;height:16px;color:#000"><span class="k" style="font-size:13.00px;left:0.00px;transform:scaleX(0.7110);">ドキュメント</span></div>
<div class="t" id="n_pic" style="left:218.30px;top:407.6px;font-size:12px;line-height:16px;height:16px;color:#000"><span class="k" style="font-size:13.00px;left:0.00px;transform:scaleX(0.7157);">ピクチャ</span></div>
<div class="t" id="n_shot" style="left:218.30px;top:431.6px;font-size:12px;line-height:16px;height:16px;color:#000"><span class="k" style="font-size:13.00px;left:0.00px;transform:scaleX(0.6692);">スクリーンショット</span></div>
<div class="t" id="n_vid" style="left:218.30px;top:455.6px;font-size:12px;line-height:16px;height:16px;color:#000"><span class="k" style="font-size:13.00px;left:0.00px;transform:scaleX(0.7013);">ビデオ</span></div>
<div class="t" id="n_mus" style="left:217.30px;top:479.6px;font-size:12px;line-height:16px;height:16px;color:#000"><span class="k" style="font-size:13.00px;left:0.00px;transform:scaleX(0.6830);">ミュージック</span></div>
<div class="t" id="n_od" style="left:211.70px;top:511.8px;font-size:12px;line-height:16px;height:16px;color:#000"><span class="l" style="left:0.00px;transform:scaleX(0.9629);">OneDrive</span></div>
<div class="t" id="n_pc" style="left:210.70px;top:543.8px;font-size:12px;line-height:16px;height:16px;color:#000"><span class="l" style="left:0.00px;transform:scaleX(0.8984);">PC</span></div>
<div class="t" id="n_net" style="left:211.70px;top:575.6px;font-size:12px;line-height:16px;height:16px;color:#000"><span class="k" style="font-size:13.00px;left:0.00px;transform:scaleX(0.6774);">ネットワーク</span></div>
<div class="t" id="g_fold" style="left:347.70px;top:300.8px;font-size:15px;line-height:20px;height:20px;color:#273872"><span class="k" style="font-size:16.25px;left:0.00px;transform:scaleX(0.6718);">フォルダー</span><span class="l" style="left:53.75px;transform:scaleX(0.9724);"> (7)</span></div>
<div class="t" id="g_dev" style="left:348.70px;top:551.6px;font-size:15px;line-height:20px;height:20px;color:#273872"><span class="k" style="font-size:16.25px;left:0.00px;transform:scaleX(0.6604);">デバイス</span><span class="g" style="font-size:16.25px;left:42.27px;transform:scaleX(0.8243);">と</span><span class="k" style="font-size:16.25px;left:55.46px;transform:scaleX(0.6604);">ドライブ</span><span class="l" style="left:97.72px;transform:scaleX(0.9992);"> (3)</span></div>
<div class="t" id="f_3d" style="left:397.90px;top:334.6px;font-size:12px;line-height:16px;height:16px;color:#000"><span class="l" style="left:0.00px;transform:scaleX(0.9902);">3D </span><span class="k" style="font-size:13.00px;left:18.50px;transform:scaleX(0.6712);">オブジェクト</span></div>
<div class="t" id="f_desk" style="left:397.90px;top:390.6px;font-size:12px;line-height:16px;height:16px;color:#000"><span class="k" style="font-size:13.00px;left:0.00px;transform:scaleX(0.6489);">デスクトップ</span></div>
<div class="t" id="f_pic" style="left:396.90px;top:446.6px;font-size:12px;line-height:16px;height:16px;color:#000"><span class="k" style="font-size:13.00px;left:0.00px;transform:scaleX(0.7072);">ピクチャ</span></div>
<div class="t" id="f_mus" style="left:395.90px;top:502.6px;font-size:12px;line-height:16px;height:16px;color:#000"><span class="k" style="font-size:13.00px;left:0.00px;transform:scaleX(0.6720);">ミュージック</span></div>
<div class="t" id="f_down" style="left:650.50px;top:334.6px;font-size:12px;line-height:16px;height:16px;color:#000"><span class="k" style="font-size:13.00px;left:0.00px;transform:scaleX(0.6722);">ダウンロード</span></div>
<div class="t" id="f_doc" style="left:648.50px;top:390.6px;font-size:12px;line-height:16px;height:16px;color:#000"><span class="k" style="font-size:13.00px;left:0.00px;transform:scaleX(0.6997);">ドキュメント</span></div>
<div class="t" id="f_vid" style="left:650.50px;top:446.6px;font-size:12px;line-height:16px;height:16px;color:#000"><span class="k" style="font-size:13.00px;left:0.00px;transform:scaleX(0.7122);">ビデオ</span></div>
<div class="t" id="d_c" style="left:396.90px;top:578.8px;font-size:12px;line-height:16px;height:16px;color:#000"><span class="k" style="font-size:13.00px;left:0.00px;transform:scaleX(0.6610);">ローカル</span><span class="l" style="left:34.37px;transform:scaleX(0.9567);"> </span><span class="k" style="font-size:13.00px;left:37.57px;transform:scaleX(0.6610);">ディスク</span><span class="l" style="left:71.95px;transform:scaleX(0.9567);"> (C:)</span></div>
<div class="t" id="d_cf" style="left:396.90px;top:610.3px;font-size:12px;line-height:16px;height:16px;color:#6d6d6d"><span class="h" style="left:0.00px;transform:scaleX(0.9971);">空</span><span class="g" style="font-size:13.00px;left:11.97px;transform:scaleX(0.8265);">き</span><span class="h" style="left:22.71px;transform:scaleX(0.9971);">領域</span><span class="l" style="left:46.64px;transform:scaleX(0.8996);"> 401 GB/420 GB</span></div>
<div class="t" id="d_d" style="left:650.50px;top:578.8px;font-size:12px;line-height:16px;height:16px;color:#000"><span class="k" style="font-size:13.00px;left:0.00px;transform:scaleX(0.6630);">ローカル</span><span class="l" style="left:34.48px;transform:scaleX(1.0016);"> </span><span class="k" style="font-size:13.00px;left:37.83px;transform:scaleX(0.6630);">ディスク</span><span class="l" style="left:72.30px;transform:scaleX(1.0016);"> (D:)</span></div>
<div class="t" id="d_df" style="left:650.50px;top:610.3px;font-size:12px;line-height:16px;height:16px;color:#6d6d6d"><span class="h" style="left:0.00px;transform:scaleX(1.0009);">空</span><span class="g" style="font-size:13.00px;left:12.01px;transform:scaleX(0.8296);">き</span><span class="h" style="left:22.80px;transform:scaleX(1.0009);">領域</span><span class="l" style="left:46.82px;transform:scaleX(0.9088);"> 975 GB/976 GB</span></div>
<div class="t" id="d_dvd" style="left:396.90px;top:641.8px;font-size:12px;line-height:16px;height:16px;color:#000"><span class="l" style="left:0.00px;transform:scaleX(0.9079);">DVD RW </span><span class="k" style="font-size:13.00px;left:47.01px;transform:scaleX(0.6590);">ドライブ</span><span class="l" style="left:81.28px;transform:scaleX(0.9079);"> (I:)</span></div>
<div class="t" id="s_count" style="left:179.50px;top:808.6px;font-size:12px;line-height:16px;height:16px;color:#2c3a4e"><span class="l" style="left:0.00px;transform:scaleX(0.8698);">10 </span><span class="h" style="left:14.51px;transform:scaleX(1.0413);">個</span><span class="g" style="font-size:13.00px;left:27.01px;transform:scaleX(0.8631);">の</span><span class="h" style="left:38.23px;transform:scaleX(1.0413);">項目</span></div>
<div id="taskbar"></div>
<div class="box" style="left:124px;top:1078px;width:32px;height:2px;background:#0b64b8"></div><div class="box" style="left:156px;top:1078px;width:8px;height:2px;background:#74aedc"></div>
<svg class="abs" style="left:-11px;top:1052px" width="16" height="16" viewBox="0 0 16 16" ><circle cx="8" cy="8" r="5.6" fill="none" stroke="#000" stroke-width="2.4"/></svg>
<svg class="abs" style="left:35.5px;top:1051.8px" width="17" height="16" viewBox="0 0 17 16" ><g fill="none" stroke="#000" stroke-width="1.1"><rect x="2.2" y="5" width="8" height="6"/><path d="M0.5,1.4 H11 M0.5,14.4 H11 M2.2,1.4 V3 M10.2,1.4 V3 M2.2,14.4 V12.8 M10.2,14.4 V12.8"/><path d="M14.6,0.4 V3.6 M14.6,8.6 V15.4"/></g><rect x="13.2" y="4.4" width="2.8" height="2.8" fill="#000"/></svg>
<svg class="abs" style="left:82.5px;top:1047px" width="26" height="26" viewBox="0 0 26 26" ><defs><linearGradient id="e1" x1=".2" y1="0" x2=".7" y2="1"><stop offset="0" stop-color="#1690ea"/><stop offset=".5" stop-color="#1368c8"/><stop offset="1" stop-color="#0c3c8a"/></linearGradient>
<linearGradient id="e2" x1="0" y1=".3" x2="1" y2=".55"><stop offset="0" stop-color="#2ea6ee"/><stop offset=".45" stop-color="#28bccc"/><stop offset=".78" stop-color="#4ad468"/><stop offset="1" stop-color="#74e070"/></linearGradient></defs>
<circle cx="12.7" cy="12.8" r="12.1" fill="url(#e2)"/>
<path d="M12.6,9.4 C14.6,10.2 14.7,12 14.3,14 C14,15.8 15.4,16.9 17.5,16.9 C20,16.9 22.6,16.6 24.4,15.2 L25.4,17 L23.6,20.4 L17,21.4 L11,18.4 L8.8,14 L10,10.6 Z" fill="#c2f6fa"/>
<path d="M2.6,7.2 C6,6.2 10.5,7 13,9.2 C10.8,10.4 9.6,12.6 9.8,14.6 C10.1,17.2 12.6,19 16,19.7 C18.6,20.2 21,19.8 22.9,18.8 C22,21.6 19.6,23.8 16.6,24.7 C13,25.7 8.6,24.9 5.2,22.3 C2,19.7 0.3,16 0.6,12.6 C0.8,10.6 1.6,8.6 2.6,7.2 Z" fill="url(#e1)"/>
<path d="M22.9,18.8 C23.6,18.4 24.4,17.6 25,16.6 C25.4,19 24,21.6 22,23.2 C22.6,21.8 23,20.2 22.9,18.8 Z" fill="#d0e4ee"/></svg>
<svg class="abs" style="left:132px;top:1050px" width="23" height="20" viewBox="0 0 23 20" ><rect x="0.6" y="1.2" width="10" height="3" rx=".6" fill="#d39c1c"/><rect x="0.4" y="2.8" width="21.6" height="16.2" rx=".8" fill="#fccc4e"/>
<rect x="0.4" y="2.8" width="21.6" height="3" fill="#fdd768" opacity=".7"/>
<path d="M5.2,11.4 H18.4 V19 H14.2 V15 H9.6 V19 H5.2 Z" fill="#3a80d0"/><rect x="5.2" y="11.4" width="13.2" height="2" fill="#4a90dc"/></svg>
<svg class="abs" style="left:180.6px;top:1048.3px" width="25" height="23" viewBox="0 0 25 23" ><polygon points="0.4,7.6 12.2,0.2 24,7.6" fill="#0c5aa8"/><rect x="0.4" y="7.6" width="23.6" height="14.8" fill="#2aa2e2"/>
<polygon points="0.4,7.6 24,22.4 0.4,22.4" fill="#1b82cc"/><polygon points="24,7.6 24,22.4 12.2,15" fill="#35b4ea"/>
<polygon points="3.2,8 21.2,8 12.2,14.2" fill="#fff"/><polygon points="3.2,8 12.2,14.2 12.2,11" fill="#e4f0f8"/></svg>
</body>
</html>
